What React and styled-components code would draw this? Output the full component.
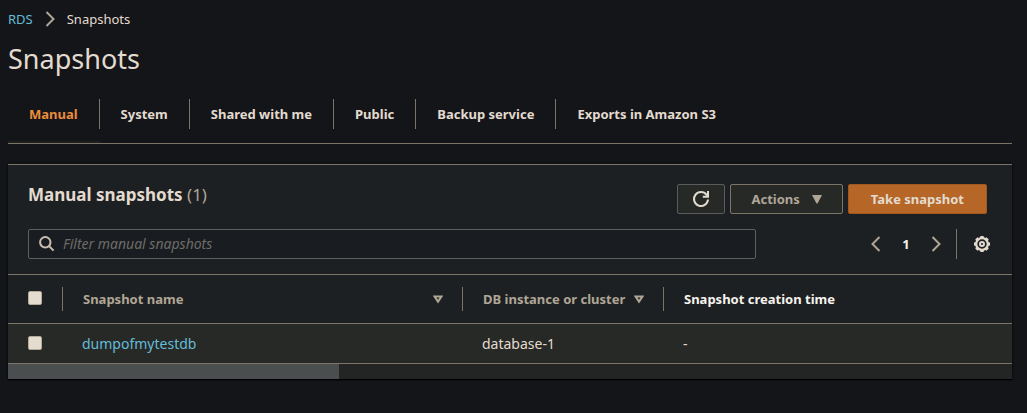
import React from "react";
import styled, { createGlobalStyle } from "styled-components";

const line = "#7d7468";
const text = "#e3dbcf";
const muted = "#b0a697";
const link = "#64bcd6";

const GlobalStyle = createGlobalStyle`
  *, *::before, *::after { box-sizing: border-box; }
  body {
    margin: 0;
    background: #141519;
    color: ${text};
    font-family: "Noto Sans", "Open Sans", sans-serif;
    font-size: 13px;
    line-height: 20px;
  }
  button, input { font: inherit; color: inherit; }
`;

const Page = styled.main`
  padding: 9px 15px 32px 8px;
`;

const Breadcrumbs = styled.nav`
  display: flex;
  align-items: center;
  gap: 12px;
  height: 20px;
  font-size: 13px;
`;

const Link = styled.a`
  color: ${link};
  text-decoration: none;
`;

const Title = styled.h1`
  margin: 12px 0 22px;
  font-size: 27px;
  line-height: 36px;
  font-weight: 400;
`;

const Tabs = styled.nav`
  display: flex;
  height: 45px;
  border-bottom: 1px solid ${line};
`;

const Tab = styled.a`
  display: flex;
  flex-direction: column;
  justify-content: space-between;
  color: ${(p) => (p.$active ? "#ea8c3c" : text)};
  border-bottom: 2px solid ${(p) => (p.$active ? "#1e2020" : "transparent")};
  font-weight: 700;
  line-height: 30px;
  text-decoration: none;
  white-space: nowrap;
`;

const TabLabel = styled.span`
  padding: 0 21px;
  border-right: 1px solid ${(p) => (p.$last ? "transparent" : line)};
`;

const Panel = styled.section`
  margin-top: 20px;
  background: #1d2022;
  border-top: 1px solid ${line};
  box-shadow: 0 1px 1px #000, 0 0 2px #08090b;
`;

const PanelHeader = styled.header`
  display: flex;
  justify-content: space-between;
  padding: 19px 25px 0 20px;
`;

const PanelTitle = styled.h2`
  margin: 0;
  font-size: 17px;
  line-height: 22px;
  font-weight: 700;
`;

const Count = styled.span`
  color: ${muted};
  font-weight: 400;
`;

const Actions = styled.div`
  display: flex;
  gap: 5px;
`;

const Button = styled.button`
  display: flex;
  align-items: center;
  justify-content: center;
  gap: 12px;
  height: 30px;
  padding: 0 ${(p) => (p.$icon ? 14 : p.$primary ? 22 : 20)}px;
  border: 1px solid ${(p) => (p.$primary ? "#a2571c" : p.$icon ? "#5b5d5d" : line)};
  border-radius: 2px;
  background: ${(p) => (p.$primary ? "#b66626" : "#272927")};
  color: ${(p) => (p.$primary ? text : muted)};
  font-weight: 700;
  white-space: nowrap;
`;

const Toolbar = styled.div`
  display: flex;
  align-items: center;
  justify-content: space-between;
  padding: 15px 22px 15px 20px;
`;

const Search = styled.label`
  display: flex;
  align-items: center;
  gap: 8px;
  flex: 0 1 728px;
  height: 30px;
  padding: 0 10px;
  border: 1px solid #5d605f;
  border-radius: 2px;
  background: #191c20;
`;

const SearchInput = styled.input`
  flex: 1;
  min-width: 0;
  padding: 0;
  border: 0;
  outline: 0;
  background: transparent;
  font-size: 14px;
  &::placeholder {
    color: #6d6c68;
    font-style: italic;
    opacity: 1;
  }
`;

const Pager = styled.div`
  display: flex;
  align-items: center;
  height: 30px;
`;

const IconButton = styled.button`
  display: flex;
  padding: 0;
  border: 0;
  background: transparent;
`;

const PageNumber = styled.button`
  width: 50px;
  padding: 0;
  border: 0;
  background: transparent;
  color: #f6f3ee;
  font-weight: 700;
`;

const Divider = styled.span`
  align-self: stretch;
  width: 1px;
  margin: 0 17px 0 15px;
  background: ${line};
`;

const Table = styled.table`
  width: 100%;
  table-layout: fixed;
  border-collapse: separate;
  border-spacing: 0;
  border-top: 1px solid ${line};
`;

const Column = styled.col`
  width: ${(p) => (p.$width ? `${p.$width}px` : "auto")};
`;

const HeadCell = styled.th`
  height: 49px;
  padding: 0;
  border-bottom: 1px solid ${line};
  text-align: left;
  color: ${(p) => (p.$plain ? "#f6f3ee" : muted)};
`;

const HeadInner = styled.div`
  display: flex;
  align-items: center;
  justify-content: space-between;
  height: 24px;
  padding: 0 19px 0 20px;
  border-right: 1px solid ${(p) => (p.$last ? "transparent" : line)};
  white-space: nowrap;
`;

const Cell = styled.td`
  height: 40px;
  padding: 0 19px;
  background: #272927;
  border-bottom: 1px solid ${line};
  font-size: 14px;
  &:first-child { padding: 0 20px; }
`;

const Checkbox = styled.input.attrs({ type: "checkbox" })`
  appearance: none;
  display: block;
  width: 14px;
  height: 14px;
  margin: 0 0 2px;
  border: 1px solid #b5a998;
  border-radius: 2px;
  background: #e5dcd0;
`;

const ScrollTrack = styled.div`
  height: 15px;
  background: #232524;
`;

const ScrollThumb = styled.div`
  width: 33%;
  height: 100%;
  background: #4b4e4e;
`;

const Chevron = ({ left }) => (
  <svg width="10" height="16" viewBox="0 0 10 16" fill="none" stroke={muted} strokeWidth="2" aria-hidden="true">
    <path d={left ? "M8.5 1 1.5 8l7 7" : "M1.5 1l7 7-7 7"} />
  </svg>
);

const SearchIcon = () => (
  <svg width="16" height="16" viewBox="0 0 16 16" fill="none" stroke="#c9bfb1" strokeWidth="2" aria-hidden="true">
    <circle cx="6.3" cy="6.3" r="5.2" />
    <path d="M10.1 10.1 14.6 14.6" />
  </svg>
);

const RefreshIcon = () => (
  <svg width="18" height="18" viewBox="0 0 18 18" fill="none" stroke={text} strokeWidth="2" aria-hidden="true">
    <path d="M16 9.5A7 7 0 1 1 14.6 4.8L16 6.2" />
    <path d="M16 1v5.8h-5.2" />
  </svg>
);

const GearIcon = () => (
  <svg width="16" height="16" viewBox="0 0 16 16" fill="none" stroke={text} aria-hidden="true">
    <circle cx="8" cy="8" r="5.8" strokeWidth="2.2" />
    <g fill={text} stroke="none">
      {[0, 45, 90, 135, 180, 225, 270, 315].map((angle) => (
        <rect key={angle} x="6.2" y="0" width="3.6" height="2.6" rx="0.8" transform={`rotate(${angle} 8 8)`} />
      ))}
    </g>
    <circle cx="8" cy="8" r="2" strokeWidth="2" />
  </svg>
);

const SortIcon = () => (
  <svg width="10" height="9" viewBox="0 0 10 9" fill="none" stroke={muted} strokeWidth="2" aria-hidden="true">
    <path d="M1.6 1.5h6.8L5 6.6z" />
  </svg>
);

const CaretIcon = () => (
  <svg width="10" height="9" viewBox="0 0 10 9" fill={muted} aria-hidden="true">
    <path d="M0 0h10L5.5 8.5h-1z" />
  </svg>
);

const tabs = ["Manual", "System", "Shared with me", "Public", "Backup service", "Exports in Amazon S3"];

export default function App() {
  return (
    <>
      <GlobalStyle />
      <Page>
        <Breadcrumbs aria-label="Breadcrumb">
          <Link href="#rds">RDS</Link>
          <Chevron />
          <span>Snapshots</span>
        </Breadcrumbs>
        <Title>Snapshots</Title>
        <Tabs aria-label="Snapshot types">
          {tabs.map((name, i) => (
            <Tab key={name} href={`#tab-${i}`} $active={i === 0}>
              <TabLabel $last={i === tabs.length - 1}>{name}</TabLabel>
            </Tab>
          ))}
        </Tabs>
        <Panel>
          <PanelHeader>
            <PanelTitle>
              Manual snapshots <Count>(1)</Count>
            </PanelTitle>
            <Actions>
              <Button $icon aria-label="Refresh"><RefreshIcon /></Button>
              <Button>Actions <CaretIcon /></Button>
              <Button $primary>Take snapshot</Button>
            </Actions>
          </PanelHeader>
          <Toolbar>
            <Search>
              <SearchIcon />
              <SearchInput type="text" placeholder="Filter manual snapshots" aria-label="Filter manual snapshots" />
            </Search>
            <Pager>
              <IconButton aria-label="Previous page"><Chevron left /></IconButton>
              <PageNumber>1</PageNumber>
              <IconButton aria-label="Next page"><Chevron /></IconButton>
              <Divider />
              <IconButton aria-label="Preferences"><GearIcon /></IconButton>
            </Pager>
          </Toolbar>
          <Table>
            <colgroup>
              <Column $width={55} />
              <Column $width={400} />
              <Column $width={201} />
              <Column />
            </colgroup>
            <thead>
              <tr>
                <HeadCell><HeadInner><Checkbox aria-label="Select all snapshots" /></HeadInner></HeadCell>
                <HeadCell><HeadInner>Snapshot name <SortIcon /></HeadInner></HeadCell>
                <HeadCell><HeadInner>DB instance or cluster <SortIcon /></HeadInner></HeadCell>
                <HeadCell $plain><HeadInner $last>Snapshot creation time</HeadInner></HeadCell>
              </tr>
            </thead>
            <tbody>
              <tr>
                <Cell><Checkbox aria-label="Select dumpofmytestdb" /></Cell>
                <Cell><Link href="#dumpofmytestdb">dumpofmytestdb</Link></Cell>
                <Cell>database-1</Cell>
                <Cell>-</Cell>
              </tr>
            </tbody>
          </Table>
          <ScrollTrack><ScrollThumb /></ScrollTrack>
        </Panel>
      </Page>
    </>
  );
}
